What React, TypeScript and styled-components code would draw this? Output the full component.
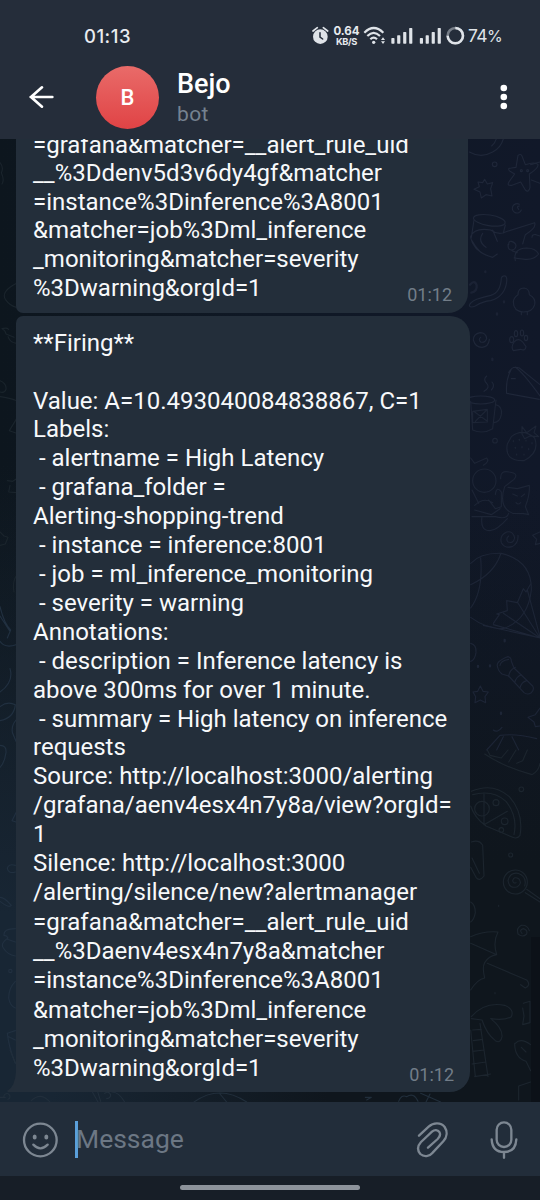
import React from 'react';
import styled, { createGlobalStyle } from 'styled-components';

const Global = createGlobalStyle`
  * { box-sizing: border-box; }
  body { margin: 0; background: #17202a; font-family: Roboto, sans-serif; }
  svg { display: block; flex: none; }
`;

const Phone = styled.div`
  width: 540px;
  height: 1200px;
  display: flex;
  flex-direction: column;
  overflow: hidden;
`;

const TopPanel = styled.header`
  height: 139px;
  flex: none;
  background: #252d3a;
  color: #fff;
`;

const StatusBar = styled.div`
  height: 60px;
  padding: 12px 38px 0 84px;
  display: flex;
  align-items: center;
`;

const Clock = styled.div`
  flex: 1;
  font: 500 18.5px Inter, sans-serif;
  letter-spacing: 0.5px;
  color: #e9ecf0;
`;

const NetSpeed = styled.div`
  width: 27px;
  margin: 0 3px 0 4px;
  display: flex;
  flex-direction: column;
  align-items: center;
  font-family: Inter, sans-serif;
  font-weight: 700;
  color: #e6e9ed;
`;

const SpeedValue = styled.span`
  font-size: 11.5px;
  line-height: 11px;
`;

const SpeedUnit = styled.span`
  font-size: 9.3px;
  line-height: 9px;
  letter-spacing: -0.4px;
`;

const Battery = styled.div`
  width: 34px;
  margin-left: 3px;
  display: flex;
  align-items: baseline;
  font: 400 17.5px/22px Inter, sans-serif;
  letter-spacing: -0.6px;
  color: #dfe3e8;
`;

const Percent = styled.span`
  font-size: 16px;
`;

const Header = styled.div`
  height: 74px;
  display: flex;
  align-items: center;
  padding: 0 27px;
`;

const Avatar = styled.div`
  width: 63px;
  height: 63px;
  margin-left: 41px;
  border-radius: 50%;
  background: linear-gradient(#e96b69, #e04345);
  display: flex;
  align-items: center;
  justify-content: center;
  font-size: 22px;
  font-weight: 500;
`;

const Title = styled.div`
  margin: 3px 0 0 18px;
  flex: 1;
`;

const Name = styled.div`
  font-size: 27px;
  line-height: 31px;
  font-weight: 500;
`;

const Status = styled.div`
  font-size: 21px;
  line-height: 28px;
  letter-spacing: 0.4px;
  color: #758290;
`;

const Chat = styled.main`
  position: relative;
  height: 963px;
  flex: none;
  overflow: hidden;
  background:
    radial-gradient(330px 560px at 0 92%, #182634 20%, rgba(24, 38, 52, 0)),
    linear-gradient(180deg, rgba(15, 22, 29, 0) 35%, rgba(15, 22, 29, 1) 75%),
    linear-gradient(90deg, #0d161e, #0f1825 50%, #111829);
  display: flex;
  flex-direction: column;
  justify-content: flex-end;
  padding: 0 0 10.5px 16px;
`;

const Wallpaper = styled.svg`
  position: absolute;
  inset: 0;
  fill: none;
  stroke-width: 3.4;
  stroke-linecap: round;
  stroke-linejoin: round;
`;

const ScrollShade = styled.div`
  position: absolute;
  right: 0;
  bottom: 0;
  width: 9px;
  height: 165px;
  background: #0c1118;
`;

const Bubble = styled.section<{ $width: number; $radius: string; $padding: string }>`
  position: relative;
  flex: none;
  width: ${(p) => p.$width}px;
  padding: ${(p) => p.$padding};
  border-radius: ${(p) => p.$radius};
  background: #232e3a;
  color: #f7f9fb;
  margin-top: 3px;
  font-size: 24px;
`;

const Lines = styled.div<{ $pitch: number }>`
  display: flex;
  flex-direction: column;
  align-items: flex-start;
  line-height: ${(p) => p.$pitch}px;
  white-space: pre;
`;

const Line = styled.span`
  min-height: 1lh;
`;

const Tail = styled.svg`
  position: absolute;
  left: -9px;
  bottom: 0;
  fill: #232e3a;
`;

const Stamp = styled.time<{ $bottom: number }>`
  position: absolute;
  right: 16px;
  bottom: ${(p) => p.$bottom}px;
  font-size: 18px;
  line-height: 22px;
  color: #727d88;
`;

const Composer = styled.footer`
  height: 74px;
  flex: none;
  background: #222d3a;
  display: flex;
  align-items: center;
  padding: 0 20px 0 21px;
`;

const LineIcon = styled.svg`
  fill: none;
  stroke: #7d8792;
  stroke-width: 7;
  stroke-linecap: round;
  stroke-linejoin: round;
`;

const Caret = styled.i`
  width: 3px;
  height: 37px;
  margin-left: 15px;
  background: #5a9fda;
`;

const Placeholder = styled.div`
  flex: 1;
  margin: -1px 0 0 -2px;
  font-size: 26.5px;
  color: #6c7784;
`;

const AttachIcon = styled(LineIcon)`
  margin-right: 38px;
`;

const NavBar = styled.div`
  height: 24px;
  background: #171e27;
  display: flex;
  justify-content: center;
  padding-top: 9px;
`;

const Pill = styled.div`
  width: 180px;
  height: 5px;
  border-radius: 3px;
  background: #8d939b;
`;

const PREVIOUS = [
  '=grafana&matcher=__alert_rule_uid',
  '__%3Ddenv5d3v6dy4gf&matcher',
  '=instance%3Dinference%3A8001',
  '&matcher=job%3Dml_inference',
  '_monitoring&matcher=severity',
  '%3Dwarning&orgId=1',
];

const DETAILS = [
  '**Firing**',
  '',
  'Value: A=10.493040084838867, C=1',
  'Labels:',
  ' - alertname = High Latency',
  ' - grafana_folder =',
  'Alerting-shopping-trend',
  ' - instance = inference:8001',
  ' - job = ml_inference_monitoring',
  ' - severity = warning',
  'Annotations:',
  ' - description = Inference latency is',
  'above 300ms for over 1 minute.',
  ' - summary = High latency on inference',
  'requests',
  'Source: http://localhost:3000/alerting',
  '/grafana/aenv4esx4n7y8a/view?orgId=',
  '1',
];

const SILENCE = [
  'Silence: http://localhost:3000',
  '/alerting/silence/new?alertmanager',
  '=grafana&matcher=__alert_rule_uid',
  '__%3Daenv4esx4n7y8a&matcher',
  '=instance%3Dinference%3A8001',
  '&matcher=job%3Dml_inference',
  '_monitoring&matcher=severity',
  '%3Dwarning&orgId=1',
];

function TextLines({ lines, pitch }: { lines: string[]; pitch: number }) {
  return (
    <Lines $pitch={pitch}>
      {lines.map((text, i) => (
        <Line key={i}>{text}</Line>
      ))}
    </Lines>
  );
}

function AlarmIcon() {
  return (
    <svg width="17" height="20" viewBox="66 49 51 60" fill="#dfe3e8">
      <circle cx="91" cy="81" r="22" />
      <path d="M69 64l13-10M113 64l-13-10" stroke="#dfe3e8" strokeWidth="5" strokeLinecap="round" />
      <path d="M90 69v13l8 6" stroke="#252d3a" strokeWidth="4.5" fill="none" strokeLinecap="round" />
    </svg>
  );
}

function SignalIcons() {
  return (
    <svg width="102" height="20" viewBox="219 49 306 60" fill="#dfe3e8">
      <g fill="none" stroke="#dfe3e8" strokeWidth="6.5">
        <path d="M223 69q28-28 57 0" />
        <path d="M232 79q19-19 38 0" />
        <path d="M241 89q10-10 20 0" />
      </g>
      <circle cx="251" cy="98" r="5" />
      <path d="M273 91l6-8 6 8zM273 95l6 8 6-8z" />
      {[304, 389.5].map((x) => (
        <g key={x}>
          <rect x={x} y="85" width="9.5" height="17" rx="2" />
          <rect x={x + 17.5} y="77" width="9.5" height="25" rx="2" />
          <rect x={x + 35.5} y="67" width="9.5" height="35" rx="2" />
          <rect x={x + 53.5} y="55" width="9.5" height="47" rx="2" />
        </g>
      ))}
      <circle cx="496" cy="78" r="23" fill="none" stroke="#777e88" strokeWidth="7.5" />
      <path d="M496 55A23 23 0 1 1 473 78" fill="none" stroke="#dfe3e8" strokeWidth="7.5" />
    </svg>
  );
}

function Doodles() {
  return (
    <Wallpaper width="540" height="963" viewBox="0 139 540 963">
      <g transform="translate(360 130) scale(.33333)" stroke="#1f2739">
        <path d="M328 66q35 20 70 0q28-14 34-48M395 48q14-12 16-32" />
        <path d="M474 76q8-6 12 2l10 26q30-10 38 0q2 10-26 28l2 40q-4 18-14 8l-14-24-26 10q-18 2-8-12l16-22-14-8q-10-10 4-10l14-2z" />
        <circle cx="484" cy="122" r="3" /><circle cx="503" cy="122" r="3" />
        <path d="M512 104l28-8M514 150l26 10" />
        <path d="M374 148l8 14 16-4-6 18 4 22-18-4-14 10-4-18-18-8 16-8-4-14 14 2z" />
        <circle cx="404" cy="103" r="7" />
        <path d="M484 240a14 14 0 1 1-6-17M476 238q-8-10 2-10" />
        <ellipse cx="388" cy="271" rx="48" ry="16" transform="rotate(9 388 271)" />
        <path d="M342 270l-8 52M436 285l-6 24M332 320q10-28 60-20q24 18 50 4l82-26q6 16-28 36l-8 28M332 322q8 44 66 60l14-10M368 310q-16 24 10 42M398 300l14 34M336 332q22 40 50 46" />
        <path d="M446 344q0-12 8-10 14 4 14 14-2 12-14 12-10 0-10-16M516 322q0-10 12-8l12 4M456 362l16 6M466 392q-8-36 34-38 26 0 36 18-14 18-40 16l-34-4" />
        <path d="M424 444q2-8 12-6 6 4 4 18-6 44-48 56-24 2-46 16-14 6-18 0 0-10 22-20 22-8 42-12 30-8 32-52z" />
        <path d="M330 464q14-16 20 2 2 18-16 22M376 424v2M432 514v3M411 550v4M397 686v4" strokeWidth="7" opacity=".7" />
        <path d="M474 494q0-20 18-20 16 2 16 20 20 10 16 30-6 22-34 22-30-2-30-30 0-12 14-22zM484 546v8M502 546v8" />
        <path d="M362 622q-8 6 0 14 12 4 18-10-2-18-20-18-20 4-20 22 6 22 26 22 20-2 22-24" />
        <path d="M462 636q14-14 26 0l10 14q-2 14-16 8l-22 4q-8-10 2-26z" />
        <ellipse cx="455" cy="629" rx="6" ry="9" /><ellipse cx="468" cy="611" rx="5" ry="9" /><ellipse cx="486" cy="609" rx="5" ry="9" /><ellipse cx="498" cy="624" rx="5" ry="8" />
        <path d="M446 728q10-22 32-14l62 50M440 790q-4-40 14-72M440 790l98 18M454 746h12M466 712q20 12 74 86" />
        <path d="M380 738q-12 10 0 22t-8 24M396 756q10 12-2 24" />
        <ellipse cx="362" cy="810" rx="42" ry="12" />
      </g>
      <g transform="translate(440 400) scale(.33333)" stroke="#1d2536">
        <path d="M92 4l6 86q30 14 60-4l10-86M166 14q22 4 18 30-4 22-22 24M98 34l44-6v38l-44 2zM104 36l36 26M140 30l-34 34" />
        <circle cx="165" cy="122" r="7" />
        <path d="M214 110q34-28 70 4 16 44-32 68-60 2-50-50zM246 80l14 18 28-20-6 20 14 12-26-2-16 8-8-14z" />
        {[[220, 122], [238, 118], [258, 120], [276, 128], [226, 142], [246, 140], [266, 146], [230, 162], [252, 162]].map(([x, y]) => (
          <path key={`${x}-${y}`} d={`M${x} ${y}v3`} />
        ))}
        <path d="M92 174l12 16 36-16q10 10-10 22" />
        <circle cx="133" cy="242" r="35" />
        <path d="M182 236q-2-26 26-20 30 4 14 22l-28 22q-20 62 24 80 40 0 48 4l-10-24q14-36 12-64l-36 10-28-4" />
        <path d="M218 282l14 6M244 290l10-8M228 308q6 8 14 0M96 270l20 40M104 316q28-26 54-8M126 350q-6 42 24 42 20 0 52-36M146 300l20 26 18-6v-44q-14-20-18 8" />
        <path d="M96 350h70q34 10 40-10M104 330l50 14 26-18" />
        <path d="M206 408q-10 8-2 18 16 6 20-12-4-22-24-18-22 10-16 32 10 18 32 12 20-10 18-34" />
        <path d="M300 396l-22 10 12 12-4 16 14-4" />
        <path d="M92 490q30-32 92-30 92 22 90 110-10 90-84 116-52 0-98-34M122 474q8 100-30 150M182 462q-20 60-90 92" />
        <path d="M160 670l18-26-8-2 32-10-2-30 32 6 18-42 8 10 14-24M160 674l140 40M190 640l110 74M232 606l68 108M262 570l38 140M130 676l170 38" />
        <path d="M92 730q18 4 16 28-4 24-16 26" />
        <path d="M172 798q-4-14 30-28 12 0 12 14l8 20 56 54q6 10-4 20-12 8-22 0l-46-50-20-6q-12-10-14-24zM180 796q2-14 26-18M206 830q2-20 20-28M224 848q4-18 20-24M240 864q4-18 20-22" />
        <path d="M121 858l8 16 16 2-10 14 2 18-16-8-16 8 2-18-8-14 14-2z" />
        <path d="M194 720v4M114 798v3M150 796v3M183 938v4" strokeWidth="7" />
        <path d="M300 924l-14 20-22 8 18 14 4 14 14-2" />
        <path d="M140 1050l40-44q50-6 110 10M170 1050l20-40M216 1010l20 40M160 990q12 10 26-8" />
      </g>
      <g transform="translate(440 750) scale(.33333)" stroke="#1c252e">
        <path d="M134 12q60 40 142 62 20-10 24-34M142 0l8 16 34 8 20-24M206 36l22-36M230 40l18-8 14-32" />
        <circle cx="244" cy="118" r="7" />
        <path d="M94 124q64-28 114 16 44 50 32 116-8 12-22 6l-80-34q-34-24-46-60M98 134q60-16 100 20 36 46 24 100M132 132v92l70-40" />
        <circle cx="126" cy="176" r="22" /><circle cx="168" cy="158" r="9" /><circle cx="194" cy="214" r="10" /><circle cx="184" cy="240" r="7" />
        <path d="M94 276q24-8 34 10l4 92q-14 18-24 4l-16-30M96 324l22 46" />
        <circle cx="212" cy="315" r="6" />
        <circle cx="226" cy="396" r="36" />
        <path d="M228 398q-8 4-10-6 4-14 18-6 12 14-4 24-24 8-28-18 6-26 30-22 28 10 20 38M260 418l40 28M256 428l44 28" />
        <path d="M92 456q14 8 14 32-4 22-14 28M176 466v3M165 728v3" />
        <path d="M246 550q-10-10 4-14 14 4 10 16-12 12-26 0-6-18 10-26 18-2 24 16" />
        <path d="M92 560q40-18 82-14-16 30-4 68-24 4-36 24-8 14 0 46-22 4-42 36M92 580l78 34M142 640l118 50q14 16-4 24l-14-10" />
        <path d="M94 800q40-46 100-34 30 12 20 34-20 12-62 6 36 28 34 54-4 22-20 12-26-20-40-62l-32-4M98 840l26-2M100 872l28-4M98 904l34-4M96 942l42-6M104 980l48-8M92 840l14 140M120 820l24 160" />
        <path d="M250 760l20-6v64l-22 6 4-26-4-24M226 880q16-18 46 4M224 880q0 44 34 54l14 28M244 892l14 14M236 1050v-42l36-12" />
      </g>
      <g transform="translate(0 130) scale(.33333)" stroke="#1a242c">
        <path d="M0 98q12 14 4 30 10 22 2 34M50 460q-48 24-34 48 14 20 34 24M6 596q10 4 12 16l24 10M6 596q14-4 20 2M24 620q6 18 26 20" />
        <path d="M0 752q20 8 18 26-4 12-18 8M0 800q30 4 50 12M50 866l-22 36 22 8M22 1052l16 2 12-8M50 1088l-24-2 4-20M0 1206l12 12 12 4-8 20-16 4M50 1336q-14 20-8 50" />
      </g>
      <g transform="translate(0 600) scale(.33333)" stroke="#213040">
        <path d="M0 20q12 50 32 70l-10 24M0 48l30 46M0 124q16 22 48 10M30 206q12 40-30 70M0 320q22-18 46-6-4 40-46 48M48 360q-16 20-10 40l10 24M0 436q20 0 18 22-4 30-18 44M48 638l-12 24 12 4" />
        <path d="M46 796q-22-6-24 10 4 16 24 10M0 892q14 0 34 24-6 10-34-12M46 986q-36 0-34 20 8 0 12 8-24 16-14 30 12 20 36 24M22 1018l24 8M46 1144q-20 20-20 50 4 24 20 30M22 1300l24-8M22 1300q4 40 24 90M26 1310l20 10" />
        <circle cx="31" cy="1113" r="5" />
      </g>
      <g transform="translate(0 1050) scale(.33333)" stroke="#212e3b">
        <path d="M30 0l16 40M0 142h16M12 142a9 9 0 1 1 12 6M94 152q28-28 56 4M276 124l18 32M292 122l10 32M314 130q12-8 18 4 0 10-12 12M336 126q20 0 38 30M582 156q76-54 158 0M660 132l20 24" />
        <path d="M1100 150l14-8-18 0M1196 154q8-22 24-14 22-14 34 14M1262 130l60 26M1290 132l-12 24" />
      </g>
    </Wallpaper>
  );
}

export default function App() {
  return (
    <Phone>
      <Global />
      <TopPanel>
        <StatusBar>
          <Clock>01:13</Clock>
          <AlarmIcon />
          <NetSpeed>
            <SpeedValue>0.64</SpeedValue>
            <SpeedUnit>KB/S</SpeedUnit>
          </NetSpeed>
          <SignalIcons />
          <Battery>
            74<Percent>%</Percent>
          </Battery>
        </StatusBar>
        <Header>
          <svg width="28" height="24" viewBox="81 75 84 72" fill="none" stroke="#fff" strokeWidth="8" strokeLinecap="round" strokeLinejoin="round">
            <path d="M157 111H92M126 82l-33 29 33 29" />
          </svg>
          <Avatar>B</Avatar>
          <Title>
            <Name>Bejo</Name>
            <Status>bot</Status>
          </Title>
          <svg width="18" height="26" viewBox="0 0 18 26" fill="#fff">
            <circle cx="8.8" cy="4" r="3.3" />
            <circle cx="8.8" cy="13" r="3.3" />
            <circle cx="8.8" cy="22" r="3.3" />
          </svg>
        </Header>
      </TopPanel>
      <Chat>
        <Doodles />
        <ScrollShade />
        <Bubble $width={452} $radius="16px 16px 20px 7px" $padding="11px 16px 10.8px 17px">
          <TextLines lines={PREVIOUS} pitch={28.6} />
          <Stamp $bottom={7}>01:12</Stamp>
        </Bubble>
        <Bubble $width={454} $radius="7px 20px 20px 0" $padding="12.7px 16px 8.1px 17px">
          <Tail width="10" height="20" viewBox="0 0 10 20">
            <path d="M9 0H10V20H1Q-.5 19 1 18.300Q8 14 9 0z" />
          </Tail>
          <TextLines lines={DETAILS} pitch={28.9} />
          <TextLines lines={SILENCE} pitch={29.3} />
          <Stamp $bottom={5.5}>01:12</Stamp>
        </Bubble>
      </Chat>
      <Composer>
        <LineIcon width="39" height="42" viewBox="63 204 117 126">
          <circle cx="121" cy="270" r="49" />
          <path d="M100 284q21 22 43 0" />
          <g fill="#7d8792" stroke="none">
            <ellipse cx="104" cy="261" rx="6" ry="7.500" />
            <ellipse cx="139" cy="261" rx="6" ry="7.500" />
          </g>
        </LineIcon>
        <Caret />
        <Placeholder>Message</Placeholder>
        <AttachIcon width="35" height="42" viewBox="195 204 105 126">
          <path d="M207 257L236 230C250 217 273 217 284 231C293 245 291 262 280 274L248 308C238 320 222 322 211 312C201 300 203 287 213 276L246 245C254 238 263 239 268 246C273 254 270 260 263 267L234 293" />
        </AttachIcon>
        <LineIcon width="32" height="42" viewBox="414 204 96 126">
          <rect x="440" y="217" width="44" height="74" rx="22" />
          <path d="M425 268q2 38 37 38t37-38M462 306v17" />
        </LineIcon>
      </Composer>
      <NavBar>
        <Pill />
      </NavBar>
    </Phone>
  );
}
